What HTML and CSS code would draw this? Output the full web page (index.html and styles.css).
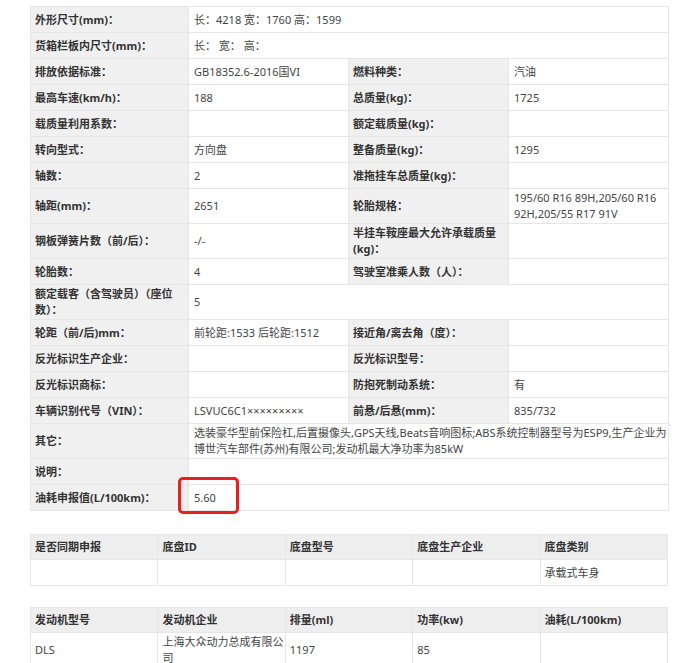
FILE: index.html
```html
<!DOCTYPE html>
<html lang="zh-CN">
<head>
  <meta charset="UTF-8">
  <title>车型参数</title>
  <link rel="stylesheet" href="styles.css">
</head>
<body>
  <div class="wrap">
    <table class="params">
      <colgroup><col class="c1"><col class="c2"><col class="c3"><col class="c4"></colgroup>
      <tr><th>外形尺寸(mm)：</th><td colspan="3">长：4218 宽：1760 高：1599</td></tr>
      <tr><th>货箱栏板内尺寸(mm)：</th><td colspan="3">长： 宽： 高：</td></tr>
      <tr><th>排放依据标准：</th><td>GB18352.6-2016国VI</td><th>燃料种类：</th><td>汽油</td></tr>
      <tr><th>最高车速(km/h)：</th><td>188</td><th>总质量(kg)：</th><td>1725</td></tr>
      <tr><th>载质量利用系数：</th><td></td><th>额定载质量(kg)：</th><td></td></tr>
      <tr><th>转向型式：</th><td>方向盘</td><th>整备质量(kg)：</th><td>1295</td></tr>
      <tr><th>轴数：</th><td>2</td><th>准拖挂车总质量(kg)：</th><td></td></tr>
      <tr><th>轴距(mm)：</th><td>2651</td><th>轮胎规格：</th><td>195/60 R16 89H,205/60 R16 92H,205/55 R17 91V</td></tr>
      <tr><th>钢板弹簧片数（前/后）：</th><td>-/-</td><th>半挂车鞍座最大允许承载质量(kg)：</th><td></td></tr>
      <tr><th>轮胎数：</th><td>4</td><th>驾驶室准乘人数（人）：</th><td></td></tr>
      <tr><th>额定载客（含驾驶员）（座位数）：</th><td colspan="3">5</td></tr>
      <tr><th>轮距（前/后)mm：</th><td>前轮距:1533 后轮距:1512</td><th>接近角/离去角（度）：</th><td></td></tr>
      <tr><th>反光标识生产企业：</th><td></td><th>反光标识型号：</th><td></td></tr>
      <tr><th>反光标识商标：</th><td></td><th>防抱死制动系统：</th><td>有</td></tr>
      <tr><th>车辆识别代号（VIN）：</th><td>LSVUC6C1×××××××××</td><th>前悬/后悬(mm)：</th><td>835/732</td></tr>
      <tr><th>其它：</th><td colspan="3">选装豪华型前保险杠,后置摄像头,GPS天线,Beats音响图标;ABS系统控制器型号为ESP9,生产企业为博世汽车部件(苏州)有限公司;发动机最大净功率为85kW</td></tr>
      <tr><th>说明：</th><td colspan="3"></td></tr>
      <tr><th>油耗申报值(L/100km)：</th><td colspan="3" class="marked">5.60<span class="hl"></span></td></tr>
    </table>

    <table class="grid">
      <tr><th>是否同期申报</th><th>底盘ID</th><th>底盘型号</th><th>底盘生产企业</th><th>底盘类别</th></tr>
      <tr><td></td><td></td><td></td><td></td><td>承载式车身</td></tr>
    </table>

    <table class="grid">
      <tr><th>发动机型号</th><th>发动机企业</th><th>排量(ml)</th><th>功率(kw)</th><th>油耗(L/100km)</th></tr>
      <tr><td>DLS</td><td>上海大众动力总成有限公司</td><td>1197</td><td>85</td><td></td></tr>
    </table>
  </div>
</body>
</html>
```

FILE: styles.css
```css
*{margin:0;padding:0;box-sizing:border-box}
body{font-family:'Noto Sans','Noto Sans CJK SC',sans-serif;font-size:11px;color:#444;background:#fff}
.wrap{padding:6px 12px 0 30px}
table{width:638px;border-collapse:collapse;table-layout:fixed;margin-bottom:23px}
th,td{border:1px solid #e6e6e6;height:26px;padding:1px 1px 1px 5px;line-height:16px;text-align:left;vertical-align:middle;word-wrap:break-word}
th{background:#f0f0f0;color:#333;font-weight:700}
td{background:#fff}
.params .c1{width:158px}
.params .c2,.params .c3,.params .c4{width:160px}
.params th{padding-left:4px}
.grid{margin-bottom:21px}
.grid th,.grid td{padding-left:4px}
.grid th{background:#eee;height:25px}
.grid td{height:26px}
.marked{position:relative}
.hl{position:absolute;left:-11px;top:-8px;width:61px;height:37px;border:3px solid #e8201f;border-radius:5px}
```
